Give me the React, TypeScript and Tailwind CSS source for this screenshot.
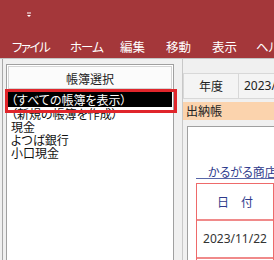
import React from "react";

const jp = "font-['Noto_Sans_CJK_JP','Noto_Sans',sans-serif] [font-feature-settings:'palt']";

export default function App() {
  const menu: [string, string][] = [
    ["ファイル", "w-[58px] tracking-[-1.5px]"],
    ["ホーム", "w-[50px] tracking-[-1px]"],
    ["編集", "w-[46px]"],
    ["移動", "w-[46px]"],
    ["表示", "w-[44px]"],
    ["ヘルプ", "w-[44px]"],
  ];
  const items = ["（新規の帳簿を作成）", "現金", "よつば銀行", "小口現金"];
  return (
    <div className={`relative w-[274px] h-[260px] overflow-hidden bg-[#f0f0f0] ${jp}`}>
      {/* title + menu bar */}
      <div className="h-[58px] bg-[#a4373a] flex flex-col">
        <div className="h-[37px] relative shrink-0">
          <svg className="absolute left-[26px] top-[12px]" width="6" height="6" viewBox="0 0 6 6">
            <rect x="1" y="0.5" width="4" height="1" fill="#ffffff" />
            <path d="M1 3 L5 3 L3 5 Z" fill="#ffffff" />
          </svg>
        </div>
        <div className="flex pl-[12px] text-[12.5px] leading-[20px] text-white whitespace-nowrap">
          {menu.map(([m, w]) => (
            <div key={m} className={`${w} shrink-0`}>{m}</div>
          ))}
        </div>
      </div>
      <div className="h-px bg-[#c4c4c4]" />
      {/* body */}
      <div className="flex h-[201px]">
        <div className="w-[2px] shrink-0" />
        <div className="w-px shrink-0 bg-[#a8a8a8]" />
        <div className="w-[3px] shrink-0" />
        {/* left panel */}
        <div className="relative mt-[5px] w-[168px] shrink-0 bg-white border border-[#a0a0a0] border-b-0">
          <div className="mx-px mt-px h-[23px] pt-[3px] border border-[#d4d4d4] bg-[#fbfbfb] flex items-center justify-center text-[12px] text-[#222]">
            帳簿選択
          </div>
          <div className="pt-[3px] text-[12px] text-[#111] whitespace-nowrap">
            <div className="h-[15px] leading-[15px] bg-black text-white pl-[3px] mx-px">（すべての帳簿を表示）</div>
            {items.map((t) => (
              <div key={t} className="h-[13px] leading-[13px] pl-[4px]">{t}</div>
            ))}
          </div>
          {/* red annotation box */}
          <div className="absolute left-[-2px] top-[24px] w-[172px] h-[24px] border-[3px] border-[#e0252b]" />
        </div>
        <div className="w-[8px] shrink-0" />
        {/* right panel */}
        <div className="w-[200px] shrink-0 border-l border-[#c8c8c8] flex flex-col">
          <div className="mt-[14px] h-[26px] shrink-0 flex border border-[#d8d8d8] bg-[#f4f4f4] text-[12px] text-[#222] whitespace-nowrap">
            <div className="w-[55px] shrink-0 border-r border-[#d8d8d8] flex items-center justify-center">年度</div>
            <div className="pl-[5px] flex items-center font-['Noto_Sans',sans-serif]">2023/04/01</div>
          </div>
          <div className="mt-[3px] h-[18px] shrink-0 bg-[#fbd3ad] flex items-center pl-[3px] text-[12px] text-[#222]">出納帳</div>
          <div className="mt-[6px] ml-[4px] flex-1 bg-white border-l border-t border-[#a0a0a0] pl-[8px]">
            <div className="mt-[38px] h-[13px] pl-[12px] text-[12px] leading-[13px] text-[#2e3a8c] whitespace-nowrap">かるがる商店</div>
            <div className="h-px bg-[#5866a8]" />
            <div className="mt-[4px] w-[78px] border border-[#ee6a6a]">
              <div className="h-[35px] flex items-center justify-center text-[12px] text-[#2e3a8c]">日　付</div>
              <div className="h-[2px] bg-[#f08a8a]" />
              <div className="h-[36px] flex items-center justify-center text-[12px] text-[#333] font-['Noto_Sans',sans-serif]">2023/11/22</div>
              <div className="h-[2px] bg-[#f08a8a]" />
              <div className="h-[20px]" />
            </div>
          </div>
        </div>
      </div>
    </div>
  );
}
